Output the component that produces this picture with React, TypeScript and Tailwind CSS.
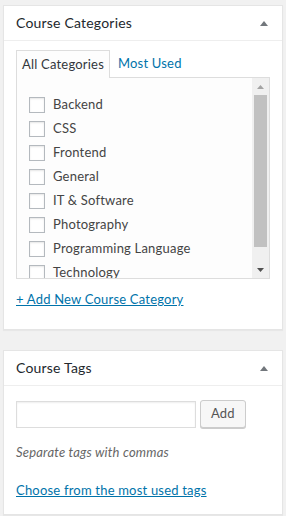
import React from "react";

const FONT = "font-['Lato','Liberation_Sans',sans-serif] tracking-[0.2px]";

const categories = [
  "Backend",
  "CSS",
  "Frontend",
  "General",
  "IT & Software",
  "Photography",
  "Programming Language",
  "Technology",
];

function Toggle() {
  // small collapse arrow in the box header
  return (
    <svg width="10" height="6" viewBox="0 0 10 6" className="mr-[13px]">
      <path d="M1 6 L5 1 L9 6 Z" fill="#72777c" />
    </svg>
  );
}

function Header({ title }: { title: string }) {
  return (
    <div className="flex h-[35px] items-center justify-between border-b border-[#eeeeee] pl-3">
      <h2 className="text-[14px] leading-none text-[#23282d]">{title}</h2>
      <Toggle />
    </div>
  );
}

function Scrollbar() {
  return (
    <div className="flex w-[17px] shrink-0 flex-col bg-[#f0f0f0]">
      <div className="flex h-[17px] items-center justify-center">
        <svg width="7" height="4" viewBox="0 0 7 4">
          <path d="M0 4 L3.5 0 L7 4 Z" fill="#a3a3a3" />
        </svg>
      </div>
      <div className="mx-[2px] h-[152px] bg-[#c1c1c1]" />
      <div className="flex-1" />
      <div className="flex h-[17px] items-center justify-center">
        <svg width="7" height="4" viewBox="0 0 7 4">
          <path d="M0 0 L7 0 L3.5 4 Z" fill="#505050" />
        </svg>
      </div>
    </div>
  );
}

function Checkbox() {
  return (
    <span className="inline-block h-4 w-4 shrink-0 border border-[#b4b9be] bg-white shadow-[inset_0_1px_2px_rgba(0,0,0,0.1)]" />
  );
}

export default function App() {
  return (
    <div className={`min-h-[516px] bg-[#f1f1f1] px-[3px] pt-[5px] ${FONT}`}>
      <div className="w-[280px] border border-[#e5e5e5] bg-white shadow-[0_1px_1px_rgba(0,0,0,0.04)]">
        <Header title="Course Categories" />
        <div className="px-3 pt-[9px] pb-[20px]">
          <div className="flex items-end">
            <div className="relative z-10 -mb-px flex h-[28px] items-center border border-b-0 border-[#dddddd] bg-[#fdfdfd] px-[5px] text-[13px] text-[#32373c]">
              All Categories
            </div>
            <a className="ml-2 flex h-[27px] items-center text-[13px] text-[#0073aa]">Most Used</a>
          </div>
          <div className="flex h-[202px] border border-[#dddddd] bg-[#fdfdfd]">
            <ul className="flex-1 overflow-hidden pt-[15px] pl-3">
              {categories.map((c) => (
                <li key={c} className="flex h-6 items-center gap-2 text-[13px] text-[#444444]">
                  <Checkbox />
                  <span>{c}</span>
                </li>
              ))}
            </ul>
            <Scrollbar />
          </div>
          <a className="mt-[10px] block text-[13px] leading-[20px] text-[#0073aa] underline">
            + Add New Course Category
          </a>
        </div>
      </div>

      <div className="mt-5 w-[280px] border border-[#e5e5e5] bg-white shadow-[0_1px_1px_rgba(0,0,0,0.04)]">
        <Header title="Course Tags" />
        <div className="px-3 pt-[14px] pb-[14px]">
          <div className="flex items-center gap-1">
            <input
              type="text"
              className="h-[27px] w-[180px] border border-[#dddddd] bg-white shadow-[inset_0_1px_2px_rgba(0,0,0,0.07)] outline-none"
            />
            <button className="h-[28px] rounded-[3px] border border-[#cccccc] bg-[#f7f7f7] px-[10px] text-[13px] text-[#555555] shadow-[0_1px_0_#cccccc]">
              Add
            </button>
          </div>
          <p className="mt-[14px] text-[13px] italic leading-[20px] text-[#666666]">Separate tags with commas</p>
          <a className="mt-[18px] block text-[13px] leading-[20px] text-[#0073aa] underline">
            Choose from the most used tags
          </a>
        </div>
      </div>
    </div>
  );
}
